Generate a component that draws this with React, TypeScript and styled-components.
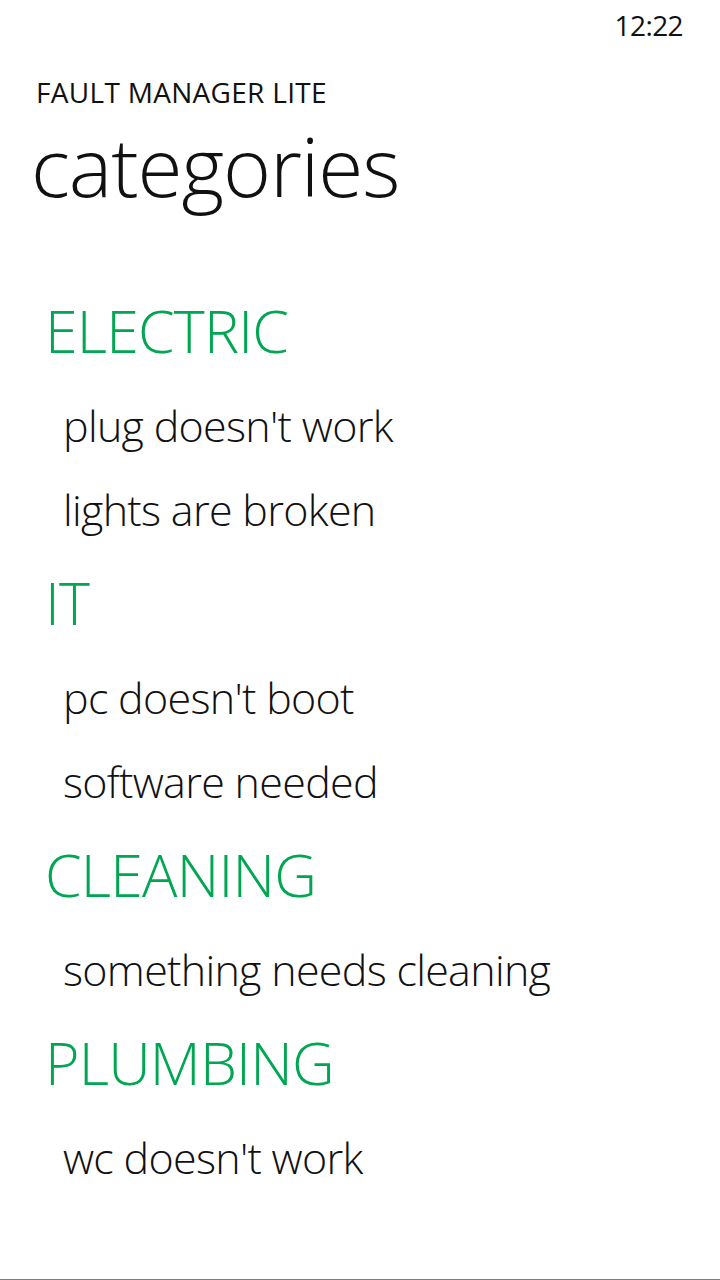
import * as React from "react";
import styled, { createGlobalStyle } from "styled-components";

const GlobalStyle = createGlobalStyle`
  html, body {
    margin: 0;
    padding: 0;
    background: #ffffff;
  }
  body {
    font-family: "Open Sans", "Segoe UI", "Liberation Sans", sans-serif;
    color: #111111;
  }
`;

const Screen = styled.div`
  box-sizing: border-box;
  display: flex;
  flex-direction: column;
  width: 720px;
  height: 1280px;
  border-bottom: 1px solid #7f7f7f;
  overflow: hidden;
`;

const StatusBar = styled.div`
  display: flex;
  justify-content: flex-end;
  height: 50px;
  padding: 0 37px;
`;

const Clock = styled.span`
  font-size: 28px;
  font-weight: 400;
  line-height: 50px;
  letter-spacing: -0.6px;
`;

const TitlePanel = styled.header`
  display: flex;
  flex-direction: column;
  padding: 24px 0 0 36px;
`;

const AppName = styled.div`
  font-size: 28px;
  font-weight: 400;
  line-height: 36px;
  letter-spacing: 0.3px;
`;

const PageTitle = styled.h1`
  margin: 5px 0 0 -5px;
  font-size: 82px;
  font-weight: 300;
  line-height: 100px;
  letter-spacing: -1.1px;
`;

const List = styled.div`
  display: flex;
  flex-direction: column;
  margin-top: 63px;
  padding-left: 45px;
`;

const GroupHeader = styled.div`
  height: 104px;
  font-size: 59px;
  font-weight: 300;
  line-height: 104px;
  color: #00a651;
  letter-spacing: -0.8px;
`;

const Item = styled.div`
  height: 84px;
  padding-left: 18px;
  font-size: 43px;
  font-weight: 300;
  line-height: 87px;
  letter-spacing: -0.7px;
`;

interface Category {
  name: string;
  faults: string[];
}

const categories: Category[] = [
  { name: "ELECTRIC", faults: ["plug doesn't work", "lights are broken"] },
  { name: "IT", faults: ["pc doesn't boot", "software needed"] },
  { name: "CLEANING", faults: ["something needs cleaning"] },
  { name: "PLUMBING", faults: ["wc doesn't work"] },
];

const App = () => (
  <>
    <GlobalStyle />
    <Screen>
      <StatusBar>
        <Clock>12:22</Clock>
      </StatusBar>
      <TitlePanel>
        <AppName>FAULT MANAGER LITE</AppName>
        <PageTitle>categories</PageTitle>
      </TitlePanel>
      <List>
        {categories.map(cat => (
          <React.Fragment key={cat.name}>
            <GroupHeader>{cat.name}</GroupHeader>
            {cat.faults.map(f => (
              <Item key={f}>{f}</Item>
            ))}
          </React.Fragment>
        ))}
      </List>
    </Screen>
  </>
);

export default App;
